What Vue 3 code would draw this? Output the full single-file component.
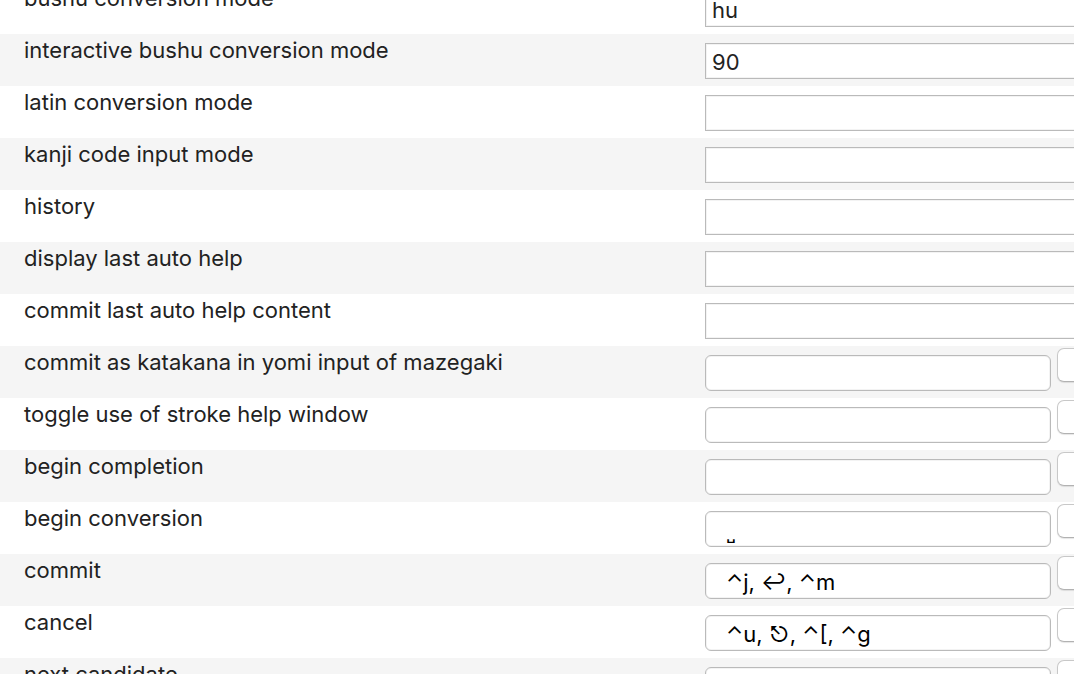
<script setup>
import { ref } from 'vue'

const rows = ref([
  { id: 'bushu', label: 'bushu conversion mode', kind: 'text', value: 'hu' },
  { id: 'interactive-bushu', label: 'interactive bushu conversion mode', kind: 'text', value: '90' },
  { id: 'latin', label: 'latin conversion mode', kind: 'text', value: '' },
  { id: 'kanji-code', label: 'kanji code input mode', kind: 'text', value: '' },
  { id: 'history', label: 'history', kind: 'text', value: '' },
  { id: 'display-help', label: 'display last auto help', kind: 'text', value: '' },
  { id: 'commit-help', label: 'commit last auto help content', kind: 'text', value: '' },
  { id: 'katakana', label: 'commit as katakana in yomi input of mazegaki', kind: 'key', value: '' },
  { id: 'stroke-help', label: 'toggle use of stroke help window', kind: 'key', value: '' },
  { id: 'completion', label: 'begin completion', kind: 'key', value: '' },
  { id: 'conversion', label: 'begin conversion', kind: 'key', value: '˽' },
  { id: 'commit', label: 'commit', kind: 'key', value: '⌃j, ↩, ⌃m' },
  { id: 'cancel', label: 'cancel', kind: 'key', value: '⌃u, ⎋, ⌃[, ⌃g' },
  { id: 'next', label: 'next candidate', kind: 'key', value: '' }
])
</script>

<template>
  <main class="pane">
    <div class="list">
      <div v-for="row in rows" :key="row.id" class="row">
        <label :id="row.id + '-name'" class="name" :for="row.id">{{ row.label }}</label>
        <div class="control">
          <input :id="row.id" v-model="row.value" type="text" class="field" :class="row.kind" spellcheck="false" />
          <button v-if="row.kind === 'key'" type="button" class="edit" :aria-labelledby="row.id + '-name'"></button>
        </div>
      </div>
    </div>
  </main>
</template>

<style>
body {
  background: #fff;
}
</style>

<style scoped>
.pane {
  height: 100vh;
  overflow: hidden;
  font-family: Inter, "Liberation Sans", sans-serif;
  font-size: 22px;
  color: #222;
}
.list {
  margin-top: -18px;
}
.row {
  display: grid;
  grid-template-columns: minmax(0, 1fr) 369px;
  height: 52px;
  background: #fff;
}
.row:nth-child(even) {
  background: #f5f5f5;
}
.name {
  padding: 3px 24px 0;
  line-height: 26px;
  white-space: nowrap;
}
.control {
  display: flex;
  align-items: flex-start;
  gap: 6px;
}
.field {
  box-sizing: border-box;
  flex: none;
  height: 36px;
  margin: 9px 0 0;
  padding: 2px 6px 0;
  border: 1px solid #bababa;
  border-radius: 0;
  outline: none;
  background: #fff;
  box-shadow: inset 0 0 0 1px #f3f3f3;
  color: #222;
  font: inherit;
}
.text {
  width: 440px;
}
.key {
  width: 346px;
  padding: 2px 20px 0;
  border-radius: 6px;
  color: #000;
  font-family: Inter, "DejaVu Sans", sans-serif;
}
.edit {
  flex: none;
  width: 88px;
  height: 34px;
  margin: 2px 0 0;
  border: 1px solid #c8c8c8;
  border-bottom-color: #b2b2b2;
  border-radius: 7px;
  background: #fff;
  box-shadow: 0 1px 1px #0000001a;
}
</style>
